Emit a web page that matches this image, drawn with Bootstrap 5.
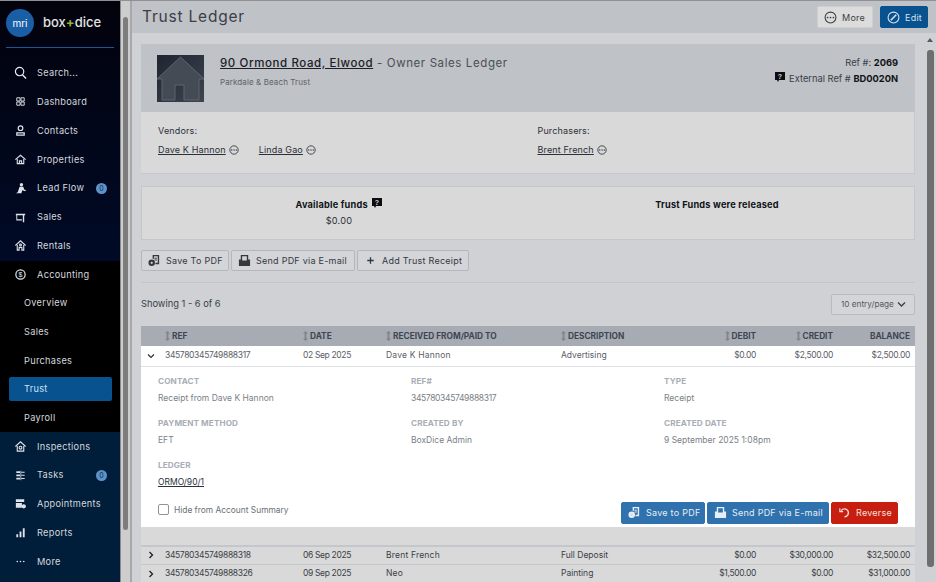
<!DOCTYPE html>
<html lang="en"><head><meta charset="utf-8"><title>Trust Ledger</title>
<link href="https://cdn.jsdelivr.net/npm/bootstrap@5.3.0/dist/css/bootstrap.min.css" rel="stylesheet">
<style>
html,body{height:582px;overflow:hidden}
body{font-family:Inter,"Liberation Sans",sans-serif;font-size:9px;color:#2c3038;background:#cfd1d5}
.shell{height:582px;border-top:1px solid #8f9194}
.side{width:121px;flex:none;background:#000;border-right:1px solid #8a8a8a;color:#d5d8de}
.side-top{height:260px;background:linear-gradient(#02020c,#000a26)}
.side-bot{background:#001d3a;height:150px}
.acct{height:171px;background:#000}
.logo-row{height:47px;margin:0 6px;border-bottom:1px solid #1a5a94;gap:9px}
.logo-c{width:28px;height:28px;border-radius:50%;background:#1a5ea6;color:#fff;font-size:10px;line-height:28px;text-align:center;margin-top:-3px;flex:none}
.logo-t{font-size:13px;color:#e3e3e3;font-weight:500;margin-top:-3px}
.logo-t b{color:#8fb52e;font-weight:700}
.nav-i{height:28.8px;padding-left:14px;gap:10px;font-size:9.2px;white-space:nowrap;letter-spacing:.3px}
.nav-i svg{width:13px;height:13px;flex:none;fill:#dfe3ea}
.nav-first{margin-top:10px;margin-bottom:.7px}
.nav-acct{height:27.7px}
.nav-s{padding-left:24px;gap:0;height:28.7px}
.nav-act{height:24px;margin:2px 8px 3px 9px;padding-left:15px;background:#07528f;border-radius:2px;color:#cfe0ef}
.num{width:11px;height:11px;border-radius:50%;background:#5e93c9;color:#0d2a4c;font-size:7px;line-height:11px;text-align:center;margin-left:auto;margin-right:13px;letter-spacing:0}
.sbar-l{width:9px;flex:none;background:#cdcdcd;padding:16px 2px 0}
.thumb-l{height:513px;width:5px;background:#7d7d7d;border-radius:3px}
.edge{width:2px;flex:none;background:#a6a8ac}
.top-b{height:32px;flex:none;background:#bfc2c6;padding:0 8px 0 10px}
.ttl{font-size:15.5px;font-weight:400;letter-spacing:.8px;color:#3a3f47;margin:0}
.btn-x{font-size:9px;height:22px;padding:0 6px;display:inline-flex;align-items:center;gap:5px;border-radius:2px;white-space:nowrap;line-height:1;letter-spacing:.25px}
.top-acts{gap:7px}
.b-more{background:#dcdcdc;border:1px solid #cfcfcf;color:#3a3f47;width:56px}
.b-edit{background:#07528f;border:1px solid #07528f;color:#d6e2ee;width:48px}
.b-plain{background:#d3d5d8;border:1px solid #b4b7bb;color:#33383f}
.b-blue{background:#2f72ad;border:1px solid #2f72ad;color:#e6eef6}
.b-red{background:#c81e10;border:1px solid #c81e10;color:#f5e3dc}
.w-a{width:88px}.w-b{width:124px}.w-c{width:112px}.w-d{width:84px}.w-e{width:122px}.w-f{width:67px}
.body-row{min-height:0;overflow:hidden}
.work{width:793px;flex:none;padding:11px 10px 0 9px}
.sbar-r{width:11px;flex:none;padding-left:2px;padding-top:5px}
.arrow{width:0;height:0;border:3.5px solid transparent;border-top:0;border-bottom:4px solid #55585c;margin:0 0 8px 0}
.thumb-r{height:517px;width:7px;background:#6e6e6e;border-radius:3px}
.panel-h{height:68px;background:#bfc2c6;padding:11px 17px 0 16px}
.thumb-h{width:47px;height:47px;flex:none;background:linear-gradient(135deg,#1f2530,#3e4550)}
.prop{font-size:11.5px;letter-spacing:.6px;color:#4a4f57}
.prop a{color:#1c2027;font-weight:500}
.trust{font-size:8px;color:#5e636b;margin-top:4px;letter-spacing:.1px}
.ref{font-size:9.3px;color:#3a3f47;text-align:right;line-height:16px;margin-top:0}
.ref b{color:#101318}
.panel-b{height:62px;background:#d9d9d9;padding:13px 17px 0;border:solid #c5c8cc;border-width:0 1px 1px 0}
.panel-b a,.lnk{color:#2c3038;text-decoration:underline}
.party{font-size:9px;line-height:11px;letter-spacing:.15px}
.party .lab{margin-bottom:8px;color:#2c3038}
.pur{padding-left:10px}
.dots{width:10px;height:10px;display:inline-block;vertical-align:-2px;margin-left:3px}
.funds{height:54px;margin-top:12px;background:#d9d9d9;border:1px solid #c3c6ca;padding-top:10px;text-align:center;font-size:9.2px;line-height:16px;letter-spacing:.2px}
.funds b{color:#101318;font-weight:700}
.acts{margin-top:10px;gap:2px;height:21px}
.acts .btn-x{height:21px}
.rule{border-top:1px solid #c3c5c9;margin-top:11px}
.show{height:43px;font-size:9.3px;color:#3a3f47;padding-bottom:1px}
.sel{width:84px;height:21px;background:#d3d5d8;border:1px solid #b8bbbf;border-radius:2px;font-size:8.2px;color:#53585f;padding:0 8px 0 9px}
.ltab{width:774px;table-layout:fixed;border-collapse:collapse;font-size:8.5px;margin:0}
.ltab th{background:#a6abb4;height:20px;font-weight:700;color:#3f4550;font-size:8.3px;padding:0;white-space:nowrap}
.ltab td{padding:0;height:18.8px;background:#d9d9d9;border-bottom:1px solid #c4c6ca;color:#3a3f47;white-space:nowrap}
.ltab tr.on td{background:#fff;color:#5b6068;border-bottom:1px solid #dfe0e3;height:20px}
.ltab td.det{background:#fff;height:160px;padding:0;border:0;vertical-align:top;white-space:normal}
.ltab td.gap{height:19px;border-bottom:2px solid #c4c6cb;background:#d9d9d9}
.tr{text-align:right;padding-right:5px!important}
.dg{letter-spacing:-.35px}
.nm{letter-spacing:.2px}
.ic-s{width:5px;height:10px;vertical-align:-2px;margin-right:2px}
.chev{width:8px;height:8px;display:block;margin-left:6px}
.det-in{padding:8px 17px 0 17px;height:160px}
.det-g{display:grid;grid-template-columns:253px 253px 1fr;row-gap:13px;height:128px;align-content:start}
.dl{font-size:8.2px;font-weight:700;color:#a9adb6;line-height:12px;margin-bottom:5px;letter-spacing:.1px}
.dv{font-size:8.5px;color:#7a7f87;line-height:12px}
.hide-w{margin-top:-6px;gap:5px}
.hide-c{width:11px;height:11px;border:1px solid #8f939a;border-radius:2px;background:#fff;flex:none}
.hide-t{font-size:8.4px;color:#6a6f76}
.det-btns{gap:2px;margin-top:-1px}
.ib{width:13px;height:13px;flex:none}
</style></head>
<body>
<svg width="0" height="0" class="d-none"><defs>
<symbol id="dots" viewBox="0 0 12 12"><circle cx="6" cy="6" r="5" fill="none" stroke="currentColor" stroke-width="1"/><circle cx="3.300" cy="6" r=".8" fill="currentColor"/><circle cx="6" cy="6" r=".8" fill="currentColor"/><circle cx="8.700" cy="6" r=".8" fill="currentColor"/></symbol>
<symbol id="help" viewBox="0 0 12 12"><path d="M1 1h10v8H5L4 11 3 9H1z" fill="#0b0d10"/><text x="6" y="7.500" font-size="7" font-weight="700" fill="#d9d9d9" text-anchor="middle" font-family="Liberation Sans">?</text></symbol>
<symbol id="sort" viewBox="0 0 5 10"><path d="M2.500 0 5 2.500H3.400v5H5L2.500 10 0 7.500h1.600v-5H0z" fill="#7f848d"/></symbol>
<symbol id="pdf" viewBox="0 0 14 14"><path d="M5 1h7v10H8V9.500h2.500v-7h-4V5H5z" fill="currentColor"/><path d="M7 4h2.500v1H7zM7 6h2.500v1H7z" fill="currentColor"/><circle cx="4" cy="9.500" r="3.500" fill="currentColor"/><circle cx="4" cy="9.500" r="1.200" fill="#d3d5d8"/></symbol>
<symbol id="tray" viewBox="0 0 14 14"><path d="M3 1h8v5h2v7H1V6h2zM4.500 2.500V7h5V2.500z" fill="currentColor"/></symbol>
</defs></svg>
<div class="shell d-flex">
<aside class="side">
 <div class="side-top">
  <div class="logo-row d-flex align-items-center"><div class="logo-c">mri</div><div class="logo-t">box<b>+</b>dice</div></div>
  <div class="nav-i nav-first d-flex align-items-center"><svg viewBox="0 0 14 14"><circle cx="6" cy="6" r="4.500" fill="none" stroke="#e8ebf0" stroke-width="1.300"/><path d="M9 9.500l4 4" stroke="#e8ebf0" stroke-width="1.500"/></svg><span>Search...</span></div>
  <div class="nav-i d-flex align-items-center"><svg viewBox="0 0 14 14"><path d="M3 3h3.500v3.500H3zM7.500 3H11v3.500H7.500zM3 7.500h3.500V11H3zM7.500 7.500H11V11H7.500z" fill="none" stroke="#dfe3ea"/></svg><span>Dashboard</span></div>
  <div class="nav-i d-flex align-items-center"><svg viewBox="0 0 14 14"><circle cx="7" cy="4.500" r="2.500" fill="none" stroke="#dfe3ea" stroke-width="1.300"/><path d="M3 12V9.500h8V12z" fill="none" stroke="#dfe3ea" stroke-width="1.300"/></svg><span>Contacts</span></div>
  <div class="nav-i d-flex align-items-center"><svg viewBox="0 0 14 14"><g fill="none" stroke="#dfe3ea" stroke-width="1.200"><path d="M1.500 7.200 7 2.500l5.500 4.700"/><path d="M3.500 6.500V11.500h7V6.500"/><path d="M5.800 11.500V8.500h2.400v3"/></g></svg><span>Properties</span></div>
  <div class="nav-i d-flex align-items-center"><svg viewBox="0 0 14 14"><circle cx="8" cy="3" r="1.800"/><path d="M6 5h4l1 3 2 1-1 1-3-1-1 3H2l2-1 1-3z"/></svg><span>Lead Flow</span><span class="num">0</span></div>
  <div class="nav-i d-flex align-items-center"><svg viewBox="0 0 14 14"><path d="M2 3h10v1.500h-1V12H9.500V4.500h-6V9h5v1.300H2.500V4.500H2z"/></svg><span>Sales</span></div>
  <div class="nav-i d-flex align-items-center"><svg viewBox="0 0 14 14"><g fill="none" stroke="#dfe3ea" stroke-width="1.200"><path d="M1.500 7 7 2l5.500 5"/><path d="M3.500 6.500v5.500h2V9h3v3h2V6.500"/><circle cx="7" cy="6.500" r="1"/></g></svg><span>Rentals</span></div>
 </div>
 <div class="acct">
  <div class="nav-i nav-acct d-flex align-items-center"><svg viewBox="0 0 14 14"><circle cx="7" cy="7" r="5" fill="none" stroke="#dfe3ea" stroke-width="1.300"/><text x="7" y="9.600" font-size="7.500" text-anchor="middle" fill="#dfe3ea" font-family="Liberation Sans">$</text></svg><span>Accounting</span></div>
  <div class="nav-i nav-s d-flex align-items-center">Overview</div>
  <div class="nav-i nav-s d-flex align-items-center">Sales</div>
  <div class="nav-i nav-s d-flex align-items-center">Purchases</div>
  <div class="nav-i nav-act d-flex align-items-center">Trust</div>
  <div class="nav-i nav-s d-flex align-items-center">Payroll</div>
 </div>
 <div class="side-bot">
  <div class="nav-i d-flex align-items-center"><svg viewBox="0 0 14 14"><g fill="none" stroke="#dfe3ea" stroke-width="1.200"><path d="M1.500 7 7 2l5.500 5"/><path d="M3.500 6.500V12h7V6.500"/><circle cx="7" cy="8.300" r="1.500"/></g></svg><span>Inspections</span></div>
  <div class="nav-i d-flex align-items-center"><svg viewBox="0 0 14 14"><path d="M2.500 2.500h4v1.700h-4zM2.500 6h4v1.700h-4zM2.500 9.500h4v1.700h-4zM8 3h3.500v1H8zM8 6.300h3.500v1H8zM8 9.800h3.500v1H8zM7 2h.8v10H7z"/></svg><span>Tasks</span><span class="num">0</span></div>
  <div class="nav-i d-flex align-items-center"><svg viewBox="0 0 14 14"><path d="M2 2.500h9v3H2zM2 6.500h6.500v5H2z"/><circle cx="10.500" cy="10" r="2.300"/></svg><span>Appointments</span></div>
  <div class="nav-i d-flex align-items-center"><svg viewBox="0 0 14 14"><path d="M2.500 9h2v3h-2zM6 6h2v6H6zM9.500 2.500h2V12h-2z"/></svg><span>Reports</span></div>
  <div class="nav-i d-flex align-items-center"><svg viewBox="0 0 14 14"><circle cx="3.500" cy="7" r=".9"/><circle cx="7" cy="7" r=".9"/><circle cx="10.500" cy="7" r=".9"/></svg><span>More</span></div>
 </div>
</aside>
<div class="sbar-l"><div class="thumb-l"></div></div>
<div class="edge"></div>
<div class="flex-grow-1 d-flex flex-column" style="min-width:0">
 <header class="top-b d-flex align-items-center justify-content-between">
  <h1 class="ttl">Trust Ledger</h1>
  <div class="d-flex top-acts">
   <span class="btn-x b-more"><svg class="ib" viewBox="0 0 12 12"><use href="#dots"/></svg>More</span>
   <span class="btn-x b-edit"><svg class="ib" viewBox="0 0 12 12" fill="none" stroke="currentColor"><circle cx="6" cy="6" r="5"/><path d="M3.500 8.500 8.500 3.500" stroke-width="1.500"/></svg>Edit</span>
  </div>
 </header>
 <div class="d-flex flex-grow-1 body-row">
  <main class="work">
   <section class="panel-h d-flex">
    <svg class="thumb-h" viewBox="0 0 47 47"><path d="M23.500 2 47 24h-5v21H27V30h-9v15H5V24H0z" fill="#454b55" stroke="#5f646d" stroke-width="1"/></svg>
    <div class="ms-3 ps-0 flex-grow-1"><div class="prop"><a href="#">90 Ormond Road, Elwood</a> - Owner Sales Ledger</div><div class="trust">Parkdale &amp; Beach Trust</div></div>
    <div class="ref"><div>Ref #: <b>2069</b></div><div><svg width="12" height="12" style="vertical-align:-1px"><use href="#help"/></svg> External Ref # <b>BD0020N</b></div></div>
   </section>
   <section class="panel-b row g-0 party">
    <div class="col-6"><div class="lab">Vendors:</div><a href="#">Dave K Hannon</a><svg class="dots"><use href="#dots"/></svg><a href="#" class="ms-3 ps-1">Linda Gao</a><svg class="dots"><use href="#dots"/></svg></div>
    <div class="col-6 pur"><div class="lab">Purchasers:</div><a href="#">Brent French</a><svg class="dots"><use href="#dots"/></svg></div>
   </section>
   <section class="funds row g-0 mx-0">
    <div class="col-6 ps-2"><b>Available funds</b> <svg width="12" height="12" style="vertical-align:-1px"><use href="#help"/></svg><div>$0.00</div></div>
    <div class="col-6 pe-2"><b>Trust Funds were released</b></div>
   </section>
   <div class="acts d-flex">
    <span class="btn-x b-plain w-a"><svg class="ib"><use href="#pdf"/></svg>Save To PDF</span>
    <span class="btn-x b-plain w-b"><svg class="ib"><use href="#tray"/></svg>Send PDF via E-mail</span>
    <span class="btn-x b-plain w-c"><svg class="ib" viewBox="0 0 14 14"><path d="M6.300 3.500h1.400v2.800h2.800v1.400H7.700v2.800H6.300V7.700H3.500V6.300h2.800z" fill="currentColor"/></svg>Add Trust Receipt</span>
   </div>
   <div class="rule"></div>
   <div class="show d-flex align-items-center justify-content-between"><span>Showing 1 - 6 of 6</span>
    <div class="sel d-flex align-items-center justify-content-between"><span>10 entry/page</span><svg width="9" height="7" viewBox="0 0 9 7" fill="none" stroke="#3a3f47" stroke-width="1.300"><path d="M1 1.500 4.500 5 8 1.500"/></svg></div></div>
   <table class="ltab">
    <colgroup><col style="width:24px"><col style="width:138px"><col style="width:83px"><col style="width:175px"><col style="width:123px"><col style="width:77px"><col style="width:77px"><col style="width:77px"></colgroup>
    <thead><tr><th></th><th><svg class="ic-s"><use href="#sort"/></svg>REF</th><th><svg class="ic-s"><use href="#sort"/></svg>DATE</th><th><svg class="ic-s"><use href="#sort"/></svg>RECEIVED FROM/PAID TO</th><th><svg class="ic-s"><use href="#sort"/></svg>DESCRIPTION</th><th class="tr"><svg class="ic-s"><use href="#sort"/></svg>DEBIT</th><th class="tr"><svg class="ic-s"><use href="#sort"/></svg>CREDIT</th><th class="tr">BALANCE</th></tr></thead>
    <tbody>
     <tr class="on"><td><svg class="chev" viewBox="0 0 8 8" fill="none" stroke="#2c3038" stroke-width="1.200"><path d="M1 2.500 4 5.500 7 2.500"/></svg></td><td class="dg">345780345749888317</td><td class="dg">02 Sep 2025</td><td class="nm">Dave K Hannon</td><td>Advertising</td><td class="tr dg">$0.00</td><td class="tr dg">$2,500.00</td><td class="tr dg">$2,500.00</td></tr>
     <tr><td colspan="8" class="det"><div class="det-in">
      <div class="det-g">
       <div><div class="dl">CONTACT</div><div class="dv">Receipt from Dave K Hannon</div></div>
       <div><div class="dl">REF#</div><div class="dv dg">345780345749888317</div></div>
       <div><div class="dl">TYPE</div><div class="dv">Receipt</div></div>
       <div><div class="dl">PAYMENT METHOD</div><div class="dv">EFT</div></div>
       <div><div class="dl">CREATED BY</div><div class="dv">BoxDice Admin</div></div>
       <div><div class="dl">CREATED DATE</div><div class="dv">9 September 2025 1:08pm</div></div>
       <div><div class="dl">LEDGER</div><div class="dv"><a href="#" class="lnk">ORMO/90/1</a></div></div>
      </div>
      <div class="d-flex align-items-center justify-content-between">
       <div class="d-flex align-items-center hide-w"><span class="hide-c"></span><span class="hide-t">Hide from Account Summary</span></div>
       <div class="d-flex det-btns">
        <span class="btn-x b-blue w-d"><svg class="ib"><use href="#pdf"/></svg>Save to PDF</span>
        <span class="btn-x b-blue w-e"><svg class="ib"><use href="#tray"/></svg>Send PDF via E-mail</span>
        <span class="btn-x b-red w-f"><svg class="ib" viewBox="0 0 14 14" fill="none" stroke="currentColor" stroke-width="1.500"><path d="M3.500 5A4.200 4.200 0 1 1 7 11.500"/><path d="M2 2.500V6h3.500" stroke-width="1.200"/></svg>Reverse</span>
       </div>
      </div>
     </div></td></tr>
     <tr><td colspan="8" class="gap"></td></tr>
     <tr><td><svg class="chev" viewBox="0 0 8 8" fill="none" stroke="#1c2027" stroke-width="1.300"><path d="M2.500 1 5.500 4 2.500 7"/></svg></td><td class="dg">345780345749888318</td><td class="dg">06 Sep 2025</td><td class="nm">Brent French</td><td>Full Deposit</td><td class="tr dg">$0.00</td><td class="tr dg">$30,000.00</td><td class="tr dg">$32,500.00</td></tr>
     <tr><td><svg class="chev" viewBox="0 0 8 8" fill="none" stroke="#1c2027" stroke-width="1.300"><path d="M2.500 1 5.500 4 2.500 7"/></svg></td><td class="dg">345780345749888326</td><td class="dg">09 Sep 2025</td><td class="nm">Neo</td><td>Painting</td><td class="tr dg">$1,500.00</td><td class="tr dg">$0.00</td><td class="tr dg">$31,000.00</td></tr>
    </tbody>
   </table>
  </main>
  <div class="sbar-r"><div class="arrow"></div><div class="thumb-r"></div></div>
 </div>
</div>
</div>
</body></html>
